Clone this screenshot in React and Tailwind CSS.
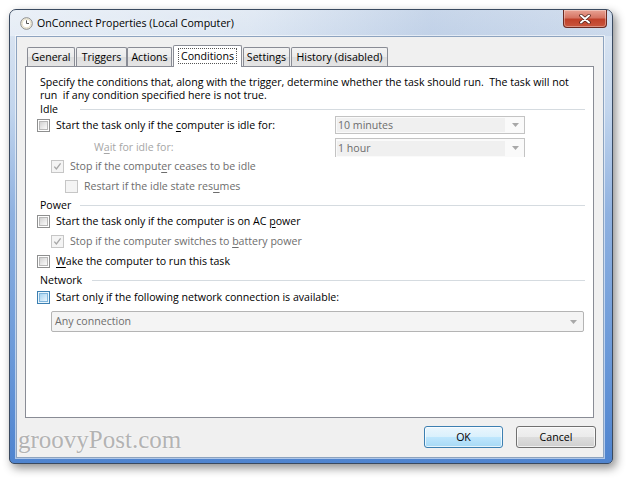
import React from "react";

function Box({ variant = "normal", checked = false }) {
  const outer = {
    normal: "border-[#8e8f8f] bg-white",
    disabled: "border-[#c6c6c6] bg-[#f4f4f4]",
    hover: "border-[#3c7fb1] bg-[#e9f6fd]",
  }[variant];
  const inner = {
    normal: "bg-[linear-gradient(135deg,#d2d2d2_0%,#e9e9e9_55%,#fbfbfb_100%)] border border-[#b7b7b7]",
    disabled: "bg-[#f4f4f4]",
    hover: "bg-[linear-gradient(135deg,#a8d4f1_0%,#cbe6f8_55%,#eaf6fd_100%)] border border-[#7fb5dc]",
  }[variant];
  return (
    <span className={`relative flex h-[13px] w-[13px] shrink-0 items-center justify-center border ${outer}`}>
      <span className={`h-[9px] w-[9px] ${inner}`} />
      {checked && (
        <svg className="absolute left-[1px] top-[1px]" width="9" height="9" viewBox="0 0 9 9">
          <path d="M1.3 4.6 L3.4 7 L7.6 1.4" stroke="#a6a6a6" strokeWidth="1.3" fill="none" />
        </svg>
      )}
    </span>
  );
}

function Arrow() {
  return (
    <svg width="7" height="4" viewBox="0 0 7 4">
      <path d="M0 0 H7 L3.5 4 Z" fill="#a8a8a8" />
    </svg>
  );
}

function U({ children }) {
  return <span className="underline underline-offset-2 decoration-1">{children}</span>;
}

function GroupHead({ label, w }) {
  return (
    <div className="flex h-[14px] items-center">
      <span className={`pl-[3px] text-black ${w}`}>{label}</span>
      <span className="h-px flex-1 bg-[#d5dbe0]" />
    </div>
  );
}

export default function App() {
  return (
    <div className="h-[480px] w-[629px] overflow-hidden bg-white pl-[9px] pt-[9px] font-['Open_Sans','Noto_Sans',sans-serif] text-[10.6px] leading-[13px]">
      <div className="flex h-[455px] w-[604px] flex-col rounded-t-[7px] rounded-b-[5px] border border-[#3a4a60] bg-[linear-gradient(180deg,#dfe8f3_0%,#d5e1f0_8%,#c2d5ed_22%,#8fb1e0_45%,#6c9ad9_75%,#4f84cf_100%)] pb-[5px] pl-[6px] pr-[8px] shadow-[3px_4px_10px_rgba(0,0,0,0.45)]">
        {/* Title bar */}
        <div className="-mx-[6px] -mr-[8px] flex h-[26px] items-start rounded-t-[6px] bg-[linear-gradient(90deg,rgba(255,255,255,0.35)_0%,rgba(255,255,255,0.1)_40%,rgba(90,130,190,0.18)_70%,rgba(90,130,190,0.1)_100%)]">
          <div className="flex h-[26px] flex-1 items-center pl-[10px]">
            <svg width="13" height="13" viewBox="0 0 13 13">
              <circle cx="6.5" cy="6.5" r="5.8" fill="#f6f2e4" stroke="#8b8b8b" strokeWidth="1" />
              <circle cx="6.5" cy="6.5" r="4.3" fill="#ffffff" stroke="#d9cfae" strokeWidth="0.6" />
              <path d="M6.5 3.3 V6.5 H9" stroke="#555" strokeWidth="1" fill="none" />
            </svg>
            <span className="ml-[4px] text-[10.6px] text-black [text-shadow:0_0_6px_rgba(255,255,255,0.9)]">
              OnConnect Properties (Local Computer)
            </span>
          </div>
          <div className="mr-[5px] flex h-[18px] w-[44px] items-center justify-center rounded-b-[4px] border border-t-0 border-[#6b2a22] bg-[linear-gradient(180deg,#e9a394_0%,#d67563_45%,#c0412a_55%,#c9563e_100%)] shadow-[inset_0_0_0_1px_rgba(255,255,255,0.35)]">
            <svg width="12" height="10" viewBox="0 0 12 10">
              <path d="M2 1.5 L10 8.5 M10 1.5 L2 8.5" stroke="#4a1d16" strokeWidth="3.4" strokeLinecap="round" />
              <path d="M2 1.5 L10 8.5 M10 1.5 L2 8.5" stroke="#ffffff" strokeWidth="2" strokeLinecap="round" />
            </svg>
          </div>
        </div>

        {/* Client */}
        <div className="flex h-[422px] w-[588px] flex-col border border-[#8da3bf] bg-[#f0f0f0] shadow-[0_0_0_1px_rgba(255,255,255,0.55)]">
          {/* Tabs */}
          <div className="ml-[8px] mt-[8px] flex h-[21px] items-end text-black">
            {[
              ["General", "ml-[2px] w-[48px]"],
              ["Triggers", "ml-[1px] w-[51px]"],
              ["Actions", "ml-0 w-[45px]"],
            ].map(([t, c]) => (
              <div key={t} className={`flex h-[19px] items-center justify-center rounded-t-[2px] border border-b-0 border-[#898c95] bg-[linear-gradient(180deg,#f3f3f3_0%,#ebebeb_50%,#dedede_51%,#e5e5e5_100%)] ${c}`}>
                {t}
              </div>
            ))}
            <div className="relative z-10 -mb-px ml-[1px] flex h-[22px] w-[69px] items-start justify-center rounded-t-[2px] border border-b-0 border-[#898c95] bg-white pt-[2px]">
              <span className="border border-dotted border-[#555] px-[2px] leading-[14px]">Conditions</span>
            </div>
            {[
              ["Settings", "ml-[1px] w-[47px]"],
              ["History (disabled)", "ml-[1px] w-[97px]"],
            ].map(([t, c]) => (
              <div key={t} className={`flex h-[19px] items-center justify-center rounded-t-[2px] border border-b-0 border-[#898c95] bg-[linear-gradient(180deg,#f3f3f3_0%,#ebebeb_50%,#dedede_51%,#e5e5e5_100%)] ${c}`}>
                {t}
              </div>
            ))}
          </div>

          {/* Panel */}
          <div className="ml-[8px] flex h-[352px] w-[569px] flex-col border border-[#898c95] bg-white pl-[11px] pr-[8px] pt-[9px] text-black">
            <p className="pl-[3px] leading-[13px] whitespace-nowrap">
              Specify the conditions that, along with the trigger, determine whether the task should run.&nbsp; The task will not
              <br />
              run&nbsp; if any condition specified here is not true.
            </p>

            <GroupHead label="Idle" w="w-[43px]" />

            <div className="flex h-[18px] items-center">
              <div className="flex w-[298px] items-center">
                <Box />
                <span className="ml-[6px]">
                  Start the task only if the <U>c</U>omputer is idle for:
                </span>
              </div>
              <div className="flex h-[18px] w-[190px] items-center justify-between border border-[#c3c3c3] bg-[#fafafa] pr-[5px]">
                <span className="ml-px flex h-[14px] w-[168px] items-center bg-[#f0f0f0] pl-[1px] text-[#6d6d6d]">10 minutes</span>
                <Arrow />
              </div>
            </div>

            <div className="mt-[4px] flex h-[19px] items-center">
              <div className="w-[298px] pl-[57px] text-[#a6a6a6]">
                W<U>a</U>it for idle for:
              </div>
              <div className="flex h-[19px] w-[190px] items-center justify-between border border-b-0 border-[#c3c3c3] bg-[#fafafa] pr-[5px]">
                <span className="ml-px flex h-[15px] w-[168px] items-center bg-[#f0f0f0] pl-[1px] text-[#6d6d6d]">1 hour</span>
                <Arrow />
              </div>
            </div>

            <div className="flex h-[18px] items-center pl-[14px] text-[#6d6d6d]">
              <Box variant="disabled" checked />
              <span className="ml-[6px]">
                Stop if the comput<U>e</U>r ceases to be idle
              </span>
            </div>

            <div className="mt-[2px] flex h-[18px] items-center pl-[28px] text-[#6d6d6d]">
              <Box variant="disabled" />
              <span className="ml-[6px]">
                Restart if the idle state res<U>u</U>mes
              </span>
            </div>

            <div className="mt-[3px]">
              <GroupHead label="Power" w="w-[43px]" />
            </div>

            <div className="flex h-[18px] items-center">
              <Box />
              <span className="ml-[6px]">
                Start the task only if the computer is on AC <U>p</U>ower
              </span>
            </div>

            <div className="mt-[2px] flex h-[18px] items-center pl-[14px] text-[#6d6d6d]">
              <Box variant="disabled" checked />
              <span className="ml-[6px]">
                Stop if the computer switches to <U>b</U>attery power
              </span>
            </div>

            <div className="mt-[2px] flex h-[18px] items-center">
              <Box />
              <span className="ml-[6px]">
                <U>W</U>ake the computer to run this task
              </span>
            </div>

            <div className="mt-[3px]">
              <GroupHead label="Network" w="w-[55px]" />
            </div>

            <div className="mt-[1px] flex h-[18px] items-center">
              <Box variant="hover" />
              <span className="ml-[6px]">
                Start onl<U>y</U> if the following network connection is available:
              </span>
            </div>

            <div className="ml-[14px] mt-[5px] flex h-[21px] w-[533px] items-center justify-between rounded-[2px] border border-[#b4b4b4] bg-[#f4f4f4] pl-[3px] pr-[6px] text-[#6d6d6d]">
              <span>Any connection</span>
              <Arrow />
            </div>
          </div>

          {/* Bottom row */}
          <div className="relative mt-[8px] flex h-[22px] items-center justify-end pr-[7px]">
            <span className="absolute left-[1px] top-[1px] font-['Liberation_Serif',serif] text-[25px] leading-[25px] text-[#b3b3b3] [text-shadow:0_0_2px_#ffffff]">
              groovyPost.com
            </span>
            <div className="flex h-[22px] w-[79px] items-center justify-center rounded-[3px] border border-[#3c7fb1] bg-[linear-gradient(180deg,#eaf6fd_0%,#d9f0fc_50%,#bee6fd_51%,#a7d9f5_100%)] shadow-[inset_0_0_0_1px_rgba(255,255,255,0.7)] text-black">
              OK
            </div>
            <div className="ml-[13px] flex h-[22px] w-[80px] items-center justify-center rounded-[3px] border border-[#707070] bg-[linear-gradient(180deg,#f2f2f2_0%,#ebebeb_50%,#dddddd_51%,#cfcfcf_100%)] shadow-[inset_0_0_0_1px_rgba(255,255,255,0.7)] text-black">
              Cancel
            </div>
          </div>
        </div>
      </div>
    </div>
  );
}
